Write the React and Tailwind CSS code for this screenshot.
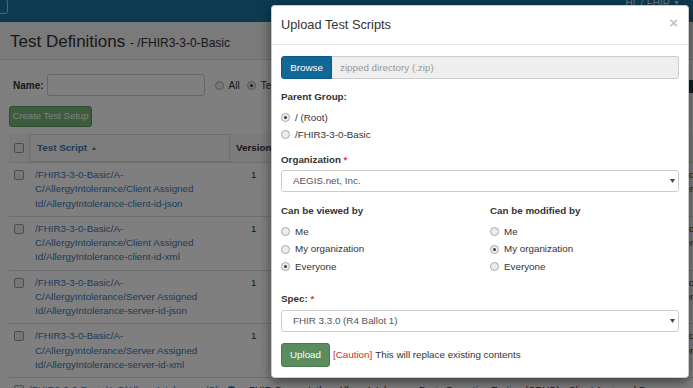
import React from 'react';

const Radio = ({ checked }) => (
  <span className="w-[9px] h-[9px] rounded-full border border-[#a9a9a9] bg-[#ececec] flex items-center justify-center shrink-0">
    {checked && <span className="w-[3px] h-[3px] rounded-full bg-[#3c3c3c]" />}
  </span>
);

const Check = () => (
  <span className="block w-[10px] h-[10px] rounded-[2px] border border-[#9a9a9a] bg-[#eeeeee] shrink-0" />
);

const RadioRow = ({ label, checked, rowClass }) => (
  <div className={`flex items-center gap-[5px] ${rowClass}`}>
    <Radio checked={checked} />
    <span className="text-[#333]">{label}</span>
  </div>
);

const Arrow = () => (
  <svg width="5" height="4" viewBox="0 0 5 4" className="shrink-0">
    <path d="M0 0H5L2.5 4Z" fill="#444" />
  </svg>
);

const Select = ({ value }) => (
  <div className="h-[22px] border border-[#cccccc] rounded-[3px] bg-white flex items-center pl-[11px] pr-[3px] text-[#555]">
    <span className="flex-1">{value}</span>
    <Arrow />
  </div>
);

const rows = [
  ['/FHIR3-3-0-Basic/A-', 'C/AllergyIntolerance/Client Assigned', 'Id/AllergyIntolerance-client-id-json'],
  ['/FHIR3-3-0-Basic/A-', 'C/AllergyIntolerance/Client Assigned', 'Id/AllergyIntolerance-client-id-xml'],
  ['/FHIR3-3-0-Basic/A-', 'C/AllergyIntolerance/Server Assigned', 'Id/AllergyIntolerance-server-id-json'],
  ['/FHIR3-3-0-Basic/A-', 'C/AllergyIntolerance/Server Assigned', 'Id/AllergyIntolerance-server-id-xml'],
];

const Background = () => (
  <div className="w-[693px] h-[388px] bg-white">
    <nav className="h-[22px] bg-[#1b75a0] flex items-start justify-between">
      <div className="w-[18px] h-[15px] -ml-[10px] -mt-[1px] border border-[#b9c7cf] rounded-[3px]" />
      <div className="-mt-[4px] mr-[13px] text-[10px] text-[#d9e6ee] flex items-center gap-[3px]">
        HL7 FHIR <span className="text-[7px]">▼</span>
      </div>
    </nav>
    <div className="h-[38px] bg-[#f4f4f4] border-b border-[#dddddd] pl-[10px] pt-[10px]">
      <h1 className="leading-[20px] text-[17px] text-[#333]">
        Test Definitions <span className="text-[12px]">- /FHIR3-3-0-Basic</span>
      </h1>
    </div>
    <div className="pl-[9px]">
      <div className="mt-[14px] h-[22px] flex items-center text-[10px]">
        <span className="ml-[4px] font-bold text-[#333]">Name:</span>
        <span className="ml-[3px] w-[158px] h-[22px] border border-[#cccccc] rounded-[3px] bg-white" />
        <div className="ml-[10px] flex items-center gap-[5px]">
          <Radio />
          <span className="text-[#333]">All</span>
        </div>
        <div className="ml-[7px] flex items-center gap-[5px]">
          <Radio checked />
          <span className="text-[#333]">Test Scripts</span>
        </div>
        <span className="ml-auto self-center w-[16px] h-[13px] mt-[3px] -mr-[12px] bg-[#1d3c4c]" />
      </div>
      <button
        type="button"
        className="mt-[10px] w-[83px] h-[21px] rounded-[3px] bg-[#7ab77b] border border-[#5f9a60] text-white text-[9.5px]"
      >
        Create Test Setup
      </button>
      <div className="mt-[7px] text-[9.8px]">
        <div className="h-[28px] flex items-stretch bg-[#f6f6f6]">
          <div className="w-[20px] shrink-0 flex items-center pl-[5px]">
            <Check />
          </div>
          <div className="w-[201px] shrink-0 border border-[#dddddd] flex items-center pl-[7px] font-bold text-[#3b78b4] gap-[4px] bg-[#fafafa]">
            Test Script <span className="text-[6px]">▲</span>
          </div>
          <div className="flex-1 flex items-center pl-[6px] font-bold text-[#333]">
            Version
          </div>
        </div>
        {rows.map((r, i) => (
          <div key={i} className="flex border-t border-[#dddddd] py-[5px] leading-[14.25px]">
            <div className="w-[20px] shrink-0 pl-[5px] pt-[2px]">
              <Check />
            </div>
            <div className="w-[201px] shrink-0 pl-[6px] text-[#3b78b4]">
              <span className="block">{r[0]}</span>
              <span className="block">{r[1]}</span>
              <span className="block">{r[2]}</span>
            </div>
            <div className="w-[60px] shrink-0 pl-[21px] text-[#333]">1</div>
            <div className="flex-1 pl-[340px] text-[#333] whitespace-nowrap">
              <span className="block">Basic Operation Testing</span>
              <span className="block">Search by identifier</span>
            </div>
          </div>
        ))}
        <div className="flex border-t border-[#dddddd] py-[5px] leading-[14.25px] whitespace-nowrap">
          <div className="w-[20px] shrink-0 pl-[5px] pt-[2px]">
            <Check />
          </div>
          <div className="w-[198px] shrink-0 text-[#3b78b4]">/FHIR3-3-0-Basic/A-C/AllergyIntolerance/Client</div>
          <span className="w-[9px] h-[9px] shrink-0 mt-[3px] rounded-full bg-[#3b78b4]" />
          <div className="pl-[13px] text-[#333]">FHIR Connectathon AllergyIntolerance Basic Operation Testing (CRUD) - Client Assigned Resource</div>
        </div>
      </div>
    </div>
  </div>
);

export default function App() {
  return (
    <div className="relative w-[693px] h-[388px] overflow-hidden font-['Liberation_Sans',Arial,sans-serif]">
      <Background />
      <div className="absolute inset-0 bg-black/50" />
      <div className="absolute left-[271px] top-[5px] w-[418px] h-[373px] bg-white rounded-[4px] border border-black/20 shadow-[0_4px_12px_rgba(0,0,0,0.5)] text-[9.8px] leading-[14px]">
        <div className="h-[39px] border-b border-[#e5e5e5] px-[9px] flex items-center justify-between">
          <h4 className="text-[12.8px] text-[#333]">Upload Test Scripts</h4>
          <span className="text-[15px] font-bold text-[#c4c4c4] mr-[1px] -mt-[4px]">×</span>
        </div>
        <div className="px-[9px] pt-[11px]">
          <div className="flex h-[23px]">
            <button
              type="button"
              className="w-[51px] h-[23px] bg-[#0f6898] border border-[#0b5a85] rounded-l-[3px] text-white text-[9.8px]"
            >
              Browse
            </button>
            <div className="flex-1 h-[23px] bg-[#eeeeee] border border-l-0 border-[#cccccc] rounded-r-[3px] flex items-center pl-[8px] text-[#999]">
              zipped directory (.zip)
            </div>
          </div>

          <div className="mt-[11px] font-bold text-[#333]">Parent Group:</div>
          <div className="mt-[5px]">
            <RadioRow label="/ (Root)" checked rowClass="h-[17px]" />
            <RadioRow label="/FHIR3-3-0-Basic" rowClass="h-[17px]" />
          </div>

          <div className="mt-[10px] font-bold text-[#333]">
            Organization <span className="text-[#d9403a]">*</span>
          </div>
          <div className="mt-[3px]">
            <Select value="AEGIS.net, Inc." />
          </div>

          <div className="mt-[12px] grid grid-cols-[209px_1fr]">
            <div>
              <div className="font-bold text-[#333]">Can be viewed by</div>
              <div className="mt-[5px]">
                <RadioRow label="Me" rowClass="h-[17.5px]" />
                <RadioRow label="My organization" rowClass="h-[17.5px]" />
                <RadioRow label="Everyone" checked rowClass="h-[17.5px]" />
              </div>
            </div>
            <div>
              <div className="font-bold text-[#333]">Can be modified by</div>
              <div className="mt-[5px]">
                <RadioRow label="Me" rowClass="h-[17.5px]" />
                <RadioRow label="My organization" checked rowClass="h-[17.5px]" />
                <RadioRow label="Everyone" rowClass="h-[17.5px]" />
              </div>
            </div>
          </div>

          <div className="mt-[16px] font-bold text-[#333]">
            Spec: <span className="text-[#d9403a]">*</span>
          </div>
          <div className="mt-[4px]">
            <Select value="FHIR 3.3.0 (R4 Ballot 1)" />
          </div>

          <div className="mt-[11px] flex items-center">
            <button
              type="button"
              className="w-[49px] h-[24px] rounded-[3px] bg-[#5b8c5d] border border-[#4a784c] text-white text-[9.8px]"
            >
              Upload
            </button>
            <span className="ml-[3px] text-[#c9302c]">[Caution]</span>
            <span className="ml-[3px] text-[#333]">This will replace existing contents</span>
          </div>
        </div>
      </div>
    </div>
  );
}
